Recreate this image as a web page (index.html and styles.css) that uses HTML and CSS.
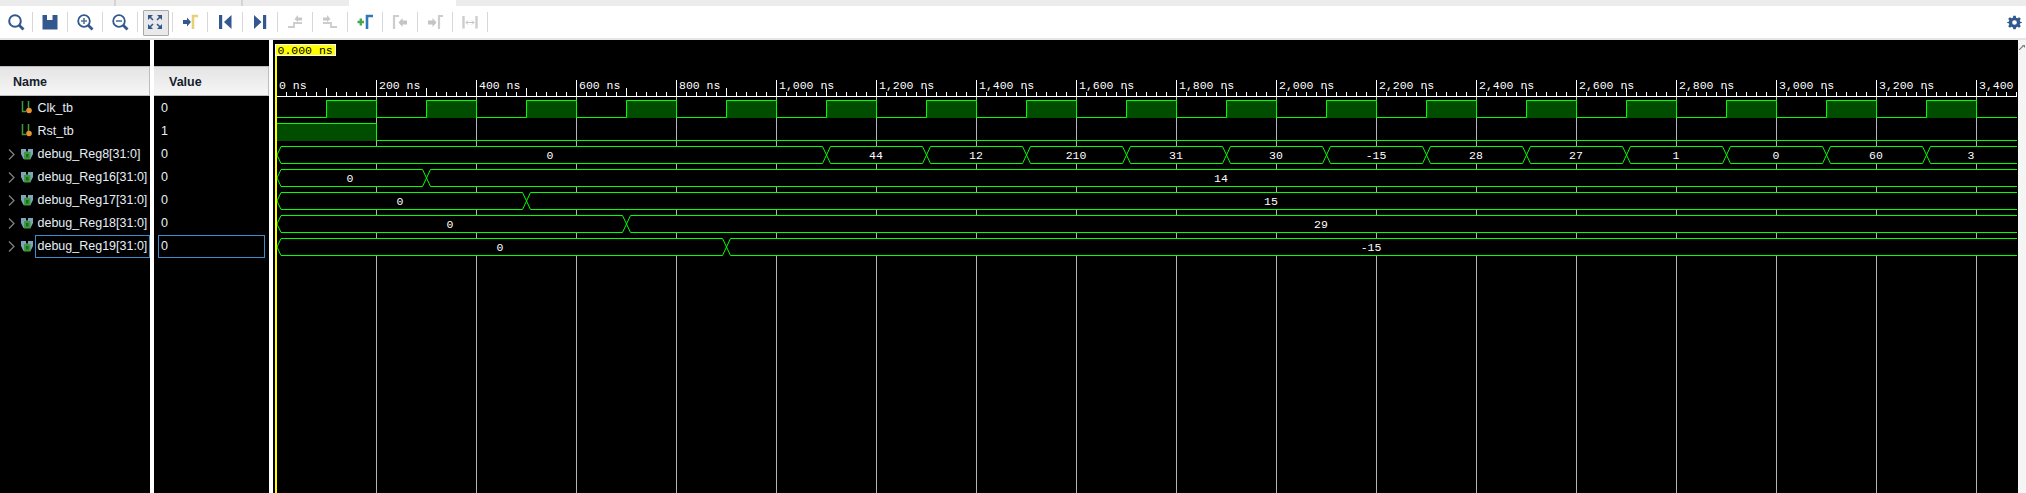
FILE: index.html
```html
<!DOCTYPE html>
<html lang="en">
<head>
<meta charset="utf-8">
<title>Waveform</title>
<link rel="stylesheet" href="styles.css">
</head>
<body>
<svg class="defs" width="0" height="0" aria-hidden="true">
  <defs>
    <g id="i-clk"><path d="M1.500 0V10.500H5M7.500 0V7" fill="none" stroke="#3f9a3f" stroke-width="1.500"/><circle cx="8" cy="9.500" r="2.800" fill="#e8922e"/></g>
    <g id="i-bus"><path d="M0 0H5V2.500H7V0H12V5L9.500 10H2.500L0 5Z" fill="#7da6b8"/><rect x="3" y="3" width="6.500" height="7.500" fill="#3f9a3f"/><rect x="5" y="5" width="2.500" height="3.500" fill="#1f6a1f"/></g>
    <path id="i-chev" d="M1 0.500 6 5.500 1 10.500" fill="none" stroke="#7f7f7f" stroke-width="1.300"/>
    <pattern id="p-minor" patternUnits="userSpaceOnUse" x="276" y="92" width="10" height="4"><rect width="1" height="4" fill="#fff"/></pattern>
    <pattern id="p-mid" patternUnits="userSpaceOnUse" x="276" y="88" width="50" height="8"><rect width="1" height="8" fill="#fff"/></pattern>
    <pattern id="p-major" patternUnits="userSpaceOnUse" x="276" y="80" width="100" height="16"><rect width="1" height="16" fill="#fff"/></pattern>
    <pattern id="p-grid" patternUnits="userSpaceOnUse" x="276" y="97" width="100" height="10"><rect width="1" height="10" fill="#b4b4b4"/></pattern>
    <pattern id="p-clk" patternUnits="userSpaceOnUse" x="276" y="100" width="100" height="18">
      <rect x="50" width="50" height="18" fill="#004d00"/>
      <path d="M0 17.500H50.500V.5H100.500V17.500" fill="none" stroke="#00ff00"/>
      <path d="M.5 0V18" stroke="#00ff00"/>
    </pattern>
  </defs>
</svg>
<div class="tabs">
  <div class="tab tab-a"></div>
  <div class="tab tab-b"></div>
  <div class="tab tab-c"></div>
  <div class="tab tab-on"></div>
  <div class="tab tab-rest"></div>
</div>
<div class="toolbar">
  <div class="tool"><svg class="ico" viewBox="0 0 24 24"><circle cx="11" cy="11" r="5.800" fill="none" stroke="#33578f" stroke-width="2"/><path d="M15.200 15.200 19.500 19.500" stroke="#33578f" stroke-width="2.800"/></svg></div>
  <div class="tool"><svg class="ico" viewBox="0 0 24 24"><path d="M4.500 5H19.500V19.500H4.500Z" fill="#33578f"/><rect x="9" y="5" width="5.500" height="5" fill="#fff"/></svg></div>
  <div class="tool"><svg class="ico" viewBox="0 0 24 24"><circle cx="11" cy="11" r="5.800" fill="none" stroke="#33578f" stroke-width="1.800"/><path d="M15.200 15.200 19.500 19.500" stroke="#33578f" stroke-width="2.800"/><path d="M8 11H14M11 8V14" stroke="#4a7a8f" stroke-width="1.600"/></svg></div>
  <div class="tool"><svg class="ico" viewBox="0 0 24 24"><circle cx="11" cy="11" r="5.800" fill="none" stroke="#33578f" stroke-width="1.800"/><path d="M15.200 15.200 19.500 19.500" stroke="#33578f" stroke-width="2.800"/><path d="M8 11H14" stroke="#4a7a8f" stroke-width="1.600"/></svg></div>
  <div class="tool tool-on"><svg class="ico" viewBox="0 0 24 24"><g fill="#33578f"><path d="M5 5H10L5 10Z"/><path d="M19 5H14L19 10Z"/><path d="M5 19H10L5 14Z"/><path d="M19 19H14L19 14Z"/></g><path d="M6 6 10 10M18 6 14 10M6 18 10 14M18 18 14 14" stroke="#33578f" stroke-width="1.600"/></svg></div>
  <div class="tool"><svg class="ico" viewBox="0 0 24 24"><path d="M5 10H9V7.500L13 12 9 16.500V14H5Z" fill="#33578f"/><path d="M15 19V6H20" fill="none" stroke="#e6d07a" stroke-width="2.600"/></svg></div>
  <div class="tool"><svg class="ico" viewBox="0 0 24 24"><rect x="6" y="5" width="3.200" height="14" fill="#33578f"/><path d="M18.500 5V19L11 12Z" fill="#33578f"/></svg></div>
  <div class="tool"><svg class="ico" viewBox="0 0 24 24"><rect x="15" y="5" width="3.200" height="14" fill="#33578f"/><path d="M6 5V19L13.500 12Z" fill="#33578f"/></svg></div>
  <div class="tool"><svg class="ico" viewBox="0 0 24 24"><path d="M5 17H11V13H19" fill="none" stroke="#cdcdcd" stroke-width="1.800"/><path d="M19 7.500H15V5L11.500 9 15 12V10.500H19Z" fill="#c8c8c8"/></svg></div>
  <div class="tool"><svg class="ico" viewBox="0 0 24 24"><path d="M5 13H13V17H19" fill="none" stroke="#cdcdcd" stroke-width="1.800"/><path d="M5 7.500H9V5L12.500 9 9 12V10.500H5Z" fill="#c8c8c8"/></svg></div>
  <div class="tool"><svg class="ico" viewBox="0 0 24 24"><path d="M4.500 12H11M7.800 8.500V15.500" stroke="#47a84a" stroke-width="2.400"/><path d="M14 19V6H20" fill="none" stroke="#2f7ab5" stroke-width="2.600"/></svg></div>
  <div class="tool"><svg class="ico" viewBox="0 0 24 24"><path d="M6 19V6H11" fill="none" stroke="#cdcdcd" stroke-width="2.200"/><path d="M19 10.500H14.500V8L10.500 12.500 14.500 17V14.500H19Z" fill="#c4c4c4"/></svg></div>
  <div class="tool"><svg class="ico" viewBox="0 0 24 24"><path d="M16 19V6H20" fill="none" stroke="#cdcdcd" stroke-width="2.200"/><path d="M5 10.500H9.500V8L13.500 12.500 9.500 17V14.500H5Z" fill="#c4c4c4"/></svg></div>
  <div class="tool tool-last"><svg class="ico" viewBox="0 0 24 24"><path d="M5.500 6V18.500M18.500 6V18.500" stroke="#cdcdcd" stroke-width="2.400"/><path d="M8 12.500H16M10 10.500 8 12.500 10 14.500M14 10.500 16 12.500 14 14.500" fill="none" stroke="#c4c4c4"/></svg></div>
  <div class="spacer"></div>
  <svg class="gear" viewBox="0 0 16 16"><path d="M6.700.8H9.300L9.700 2.800 11.200 3.400 12.900 2.300 14.700 4.100 13.600 5.800 14.200 7.300 16 7.700V8.300L14.200 8.700 13.600 10.200 14.700 11.900 12.900 13.700 11.200 12.600 9.700 13.200 9.300 15.200H6.700L6.300 13.200 4.800 12.600 3.100 13.700 1.300 11.900 2.400 10.200 1.800 8.700 0 8.300V7.700L1.800 7.300 2.400 5.800 1.300 4.100 3.100 2.300 4.800 3.400 6.300 2.800ZM8 5.500A2.500 2.500 0 1 0 8 10.500 2.500 2.500 0 1 0 8 5.500Z" fill="#33578f" fill-rule="evenodd"/></svg>
</div>
<main class="main">
  <section class="col col-name">
    <div class="col-top"></div>
    <div class="col-head">Name</div>
    <div class="row"><span class="chev-gap"></span><svg class="sig sig-clk" viewBox="0 0 11 13"><use href="#i-clk"/></svg><span class="cell">Clk_tb</span></div>
    <div class="row"><span class="chev-gap"></span><svg class="sig sig-clk" viewBox="0 0 11 13"><use href="#i-clk"/></svg><span class="cell">Rst_tb</span></div>
    <div class="row"><svg class="chev" viewBox="0 0 7 11"><use href="#i-chev"/></svg><svg class="sig" viewBox="0 0 12 11"><use href="#i-bus"/></svg><span class="cell">debug_Reg8[31:0]</span></div>
    <div class="row"><svg class="chev" viewBox="0 0 7 11"><use href="#i-chev"/></svg><svg class="sig" viewBox="0 0 12 11"><use href="#i-bus"/></svg><span class="cell">debug_Reg16[31:0]</span></div>
    <div class="row"><svg class="chev" viewBox="0 0 7 11"><use href="#i-chev"/></svg><svg class="sig" viewBox="0 0 12 11"><use href="#i-bus"/></svg><span class="cell">debug_Reg17[31:0]</span></div>
    <div class="row"><svg class="chev" viewBox="0 0 7 11"><use href="#i-chev"/></svg><svg class="sig" viewBox="0 0 12 11"><use href="#i-bus"/></svg><span class="cell">debug_Reg18[31:0]</span></div>
    <div class="row"><svg class="chev" viewBox="0 0 7 11"><use href="#i-chev"/></svg><svg class="sig" viewBox="0 0 12 11"><use href="#i-bus"/></svg><span class="cell cell-sel">debug_Reg19[31:0]</span></div>
  </section>
  <section class="col col-value">
    <div class="col-top"></div>
    <div class="col-head col-head-value">Value</div>
    <div class="row row-value"><span class="val">0</span></div>
    <div class="row row-value"><span class="val">1</span></div>
    <div class="row row-value"><span class="val">0</span></div>
    <div class="row row-value"><span class="val">0</span></div>
    <div class="row row-value"><span class="val">0</span></div>
    <div class="row row-value"><span class="val">0</span></div>
    <div class="row row-value"><span class="val val-sel">0</span></div>
  </section>
  <section class="wave">
    <svg class="wave-svg" viewBox="273 40 1745 453" width="1745" height="453">
      <rect x="376" y="97" width="1641" height="396" fill="url(#p-grid)"/>
      <rect x="277" y="92" width="1740" height="4" fill="url(#p-minor)"/>
      <rect x="277" y="88" width="1740" height="8" fill="url(#p-mid)"/>
      <rect x="277" y="80" width="1740" height="16" fill="url(#p-major)"/>
      <rect x="277" y="96" width="1740" height="1" fill="#fff"/>
      <g class="axis">
        <text x="279" y="89">0 ns</text><text x="379" y="89">200 ns</text><text x="479" y="89">400 ns</text><text x="579" y="89">600 ns</text><text x="679" y="89">800 ns</text><text x="779" y="89">1,000 ns</text><text x="879" y="89">1,200 ns</text><text x="979" y="89">1,400 ns</text><text x="1079" y="89">1,600 ns</text><text x="1179" y="89">1,800 ns</text><text x="1279" y="89">2,000 ns</text><text x="1379" y="89">2,200 ns</text><text x="1479" y="89">2,400 ns</text><text x="1579" y="89">2,600 ns</text><text x="1679" y="89">2,800 ns</text><text x="1779" y="89">3,000 ns</text><text x="1879" y="89">3,200 ns</text><text x="1979" y="89">3,400</text>
      </g>
      <rect x="277" y="100" width="1740" height="18" fill="url(#p-clk)"/>
      <path d="M277 124H376V141H277Z" fill="#004d00"/>
      <path d="M277 123.500H376.500V140.500H2017" class="line"/>
      <g class="bus-bg">
        <rect x="277" y="146" width="1740" height="18"/>
        <rect x="277" y="169" width="1740" height="18"/>
        <rect x="277" y="192" width="1740" height="18"/>
        <rect x="277" y="215" width="1740" height="18"/>
        <rect x="277" y="238" width="1740" height="18"/>
      </g>
      <path class="line" d="M277 155 281 146.500H822.500L830.500 163.500H922.500L930.500 146.500H1022.500L1030.500 163.500H1122.500L1130.500 146.500H1222.500L1230.500 163.500H1322.500L1330.500 146.500H1422.500L1430.500 163.500H1522.500L1530.500 146.500H1622.500L1630.500 163.500H1722.500L1730.500 146.500H1822.500L1830.500 163.500H1922.500L1930.500 146.500H2017"/>
      <path class="line" d="M277 155 281 163.500H822.500L830.500 146.500H922.500L930.500 163.500H1022.500L1030.500 146.500H1122.500L1130.500 163.500H1222.500L1230.500 146.500H1322.500L1330.500 163.500H1422.500L1430.500 146.500H1522.500L1530.500 163.500H1622.500L1630.500 146.500H1722.500L1730.500 163.500H1822.500L1830.500 146.500H1922.500L1930.500 163.500H2017"/>
      <path class="line" d="M277 178 281 169.500H422.500L430.500 186.500H2017M277 178 281 186.500H422.500L430.500 169.500H2017"/>
      <path class="line" d="M277 201 281 192.500H522.500L530.500 209.500H2017M277 201 281 209.500H522.500L530.500 192.500H2017"/>
      <path class="line" d="M277 224 281 215.500H622.500L630.500 232.500H2017M277 224 281 232.500H622.500L630.500 215.500H2017"/>
      <path class="line" d="M277 247 281 238.500H722.500L730.500 255.500H2017M277 247 281 255.500H722.500L730.500 238.500H2017"/>
      <g class="bus-text">
        <text x="550" y="159">0</text><text x="876" y="159">44</text><text x="976" y="159">12</text><text x="1076" y="159">210</text><text x="1176" y="159">31</text><text x="1276" y="159">30</text><text x="1376" y="159">-15</text><text x="1476" y="159">28</text><text x="1576" y="159">27</text><text x="1676" y="159">1</text><text x="1776" y="159">0</text><text x="1876" y="159">60</text><text x="1971" y="159">3</text>
        <text x="350" y="182">0</text><text x="1221" y="182">14</text>
        <text x="400" y="205">0</text><text x="1271" y="205">15</text>
        <text x="450" y="228">0</text><text x="1321" y="228">29</text>
        <text x="500" y="251">0</text><text x="1371" y="251">-15</text>
      </g>
      <rect x="275" y="56" width="2" height="437" fill="#ffff00"/>
      <rect x="275.500" y="44.500" width="60" height="11" fill="#ffff00" stroke="#fff"/>
      <text class="cursor-text" x="277.500" y="54">0.000 ns</text>
    </svg>
  </section>
  <aside class="side"><svg class="pin" viewBox="0 0 6 5"><path d="M0 5 4 1" stroke="#808080" stroke-width="1.200"/><path d="M3 0H6V3Z" fill="#808080"/></svg></aside>
</main>
</body>
</html>
```
FILE: styles.css
```css
* { box-sizing: border-box; }
html, body { margin: 0; padding: 0; height: 493px; overflow: hidden; background: #000; }
body { display: flex; flex-direction: column; font-family: "Liberation Sans", Arial, sans-serif; }
.defs { position: absolute; }

.tabs { display: flex; height: 6px; background: #ececec; flex: none; }
.tab { height: 6px; border-right: 2px solid #d4d4d4; }
.tab-a { width: 116px; }
.tab-b { width: 127px; }
.tab-c { width: 106px; border-right: 0; }
.tab-on { width: 107px; background: #fff; border-right: 0; }
.tab-rest { flex: 1; border-right: 0; }

.toolbar { display: flex; align-items: center; height: 34px; flex: none; background: #fff; border-bottom: 2px solid #e6e6e6; }
.tool { width: 35px; height: 20px; flex: none; display: flex; align-items: center; justify-content: center; border-right: 1px solid #d8d8d8; position: relative; }
.tool:first-child { width: 33px; }
.ico { width: 24px; height: 24px; flex: none; position: relative; }
.tool-on::before { content: ""; position: absolute; left: 5px; top: -2px; width: 24px; height: 24px; background: #e9e9e9; border: 1px solid #a9a9a9; border-radius: 1px; }
.spacer { flex: 1; }
.gear { width: 15px; height: 15px; flex: none; margin-right: 4px; }

.main { display: flex; flex: 1; min-height: 0; background: #000; }
.col { flex: none; border-right: 4px solid #fff; color: #e6eef6; font-size: 12.500px; }
.col-name { width: 154px; }
.col-value { width: 119px; }
.col-top { height: 26px; }
.col-head { height: 30px; line-height: 30px; padding-left: 13px; font-weight: 700; font-size: 12.500px; color: #14202c; background: linear-gradient(#e4e4e4, #f6f6f6); border: 1px solid #bdbdbd; border-left: 0; margin-bottom: 1px; }
.col-head-value { padding-left: 15px; }
.row { height: 23px; display: flex; align-items: center; }
.row-value { padding-left: 4px; }
.chev-gap { width: 21px; flex: none; }
.chev { width: 7px; height: 11px; margin: 0 6px 0 7.500px; flex: none; }
.sig { width: 12px; height: 11px; flex: none; margin-right: 3px; }
.sig-clk { width: 11px; height: 13px; margin-right: 3.500px; margin-top: -2px; }
.cell { height: 23px; line-height: 23px; padding-left: 2px; flex: none; white-space: nowrap; }
.cell-sel { width: 115px; border: 1px solid #3c8dcc; padding-left: 1.500px; line-height: 21px; margin-left: -.5px; }
.val { display: block; height: 23px; line-height: 23px; width: 107px; padding-left: 3px; }
.val-sel { border: 1px solid #3c8dcc; line-height: 21px; padding-left: 2px; }

.wave { flex: none; width: 1745px; height: 453px; overflow: hidden; }
.wave-svg { display: block; }
.line { fill: none; stroke: #00ff00; stroke-width: 1; }
.bus-bg { fill: #000; }
.axis text, .bus-text text { font-family: "Liberation Mono", monospace; font-size: 11.500px; fill: #fff; }
.bus-text text { text-anchor: middle; }
.cursor-text { font-family: "Liberation Mono", monospace; font-size: 11.500px; fill: #000; }

.side { flex: 1; background: #f5f5f5; padding: 5px 0 0 1px; }
.pin { display: block; width: 6px; height: 5px; }
```
